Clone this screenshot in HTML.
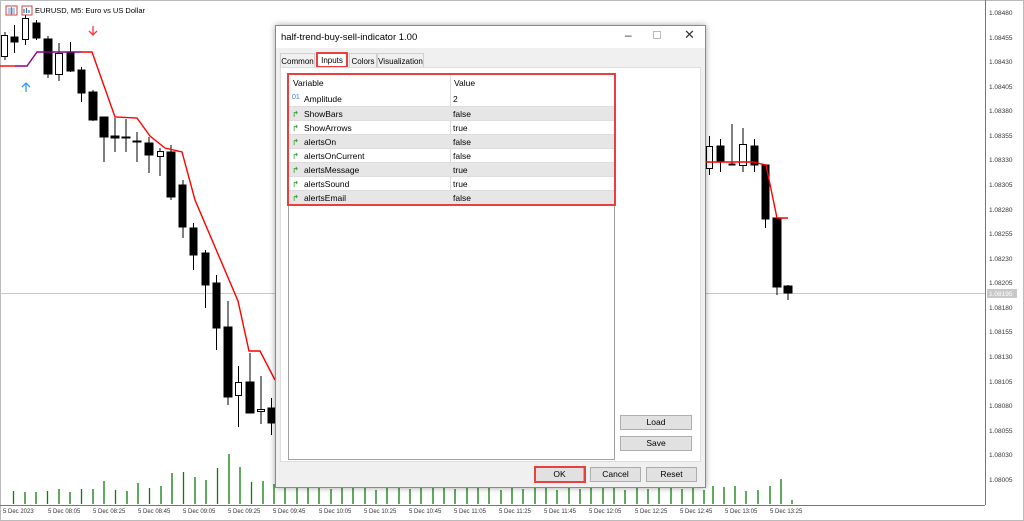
<!DOCTYPE html>
<html><head><meta charset="utf-8"><style>
*{margin:0;padding:0;box-sizing:border-box}
body{width:1024px;height:521px;background:#fff;position:relative;overflow:hidden;font-family:"Liberation Sans",sans-serif}
svg{position:absolute;left:0;top:0}
.dlg{position:absolute;left:275px;top:25px;width:431px;height:463px;background:#f0f0f0;border:1px solid #8a8a8a;box-shadow:0 0 6px rgba(0,0,0,.35);font-size:8.5px;color:#000}
.title{height:22px;background:#fff;font-size:9.5px;padding:6px 0 0 5px}
.ctl{position:absolute;top:4px;font-size:12px;color:#333}
.tab{position:absolute;top:27px;height:14px;border:1px solid #d0d0d0;border-bottom:none;background:#f0f0f0;font-size:8px;padding:3px 0 0;text-align:center;white-space:nowrap}
.panel{position:absolute;left:4px;top:41px;width:421px;height:395px;background:#fff;border:1px solid #ddd}
.tbl{position:absolute;left:7px;top:6px;width:327px;height:386px;border:1px solid #a0a0a0;background:#fff}
.row{position:absolute;left:0;width:325px;height:14px;font-size:8.5px}
.row span{position:absolute;top:2px}
.g{background:#e6e6e6;border-top:1px solid #ddd}
.btn{position:absolute;height:15px;background:#e1e1e1;border:1px solid #adadad;text-align:center;font-size:8.5px;line-height:13px}
.red{position:absolute;border:2px solid #e8403f}
</style></head><body>
<svg width="1024" height="521" xmlns="http://www.w3.org/2000/svg" font-family="Liberation Sans, sans-serif">
<rect x="0.5" y="0.5" width="1023" height="520" fill="none" stroke="#bbb"/>
<line x1="985.5" y1="0" x2="985.5" y2="505" stroke="#777"/>
<line x1="0" y1="505.5" x2="985" y2="505.5" stroke="#777"/>
<line x1="0" y1="293.5" x2="985" y2="293.5" stroke="#c8c8c8"/>
<g font-size="6.5" fill="#333">
<text x="989" y="15">1.08480</text><text x="989" y="40">1.08455</text><text x="989" y="64">1.08430</text><text x="989" y="89">1.08405</text><text x="989" y="113">1.08380</text><text x="989" y="138">1.08355</text><text x="989" y="162">1.08330</text><text x="989" y="187">1.08305</text><text x="989" y="212">1.08280</text><text x="989" y="236">1.08255</text><text x="989" y="261">1.08230</text><text x="989" y="285">1.08205</text><text x="989" y="310">1.08180</text><text x="989" y="334">1.08155</text><text x="989" y="359">1.08130</text><text x="989" y="384">1.08105</text><text x="989" y="408">1.08080</text><text x="989" y="433">1.08055</text><text x="989" y="457">1.08030</text><text x="989" y="482">1.08005</text>
</g>
<rect x="987" y="289" width="30" height="9" fill="#c8c8c8"/><text x="989" y="296" font-size="6.5" fill="#fff">1.08195</text>
<g font-size="6" fill="#333">
<text x="3" y="513">5 Dec 2023</text><text x="48" y="513">5 Dec 08:05</text><text x="93" y="513">5 Dec 08:25</text><text x="138" y="513">5 Dec 08:45</text><text x="183" y="513">5 Dec 09:05</text><text x="228" y="513">5 Dec 09:25</text><text x="273" y="513">5 Dec 09:45</text><text x="319" y="513">5 Dec 10:05</text><text x="364" y="513">5 Dec 10:25</text><text x="409" y="513">5 Dec 10:45</text><text x="454" y="513">5 Dec 11:05</text><text x="499" y="513">5 Dec 11:25</text><text x="544" y="513">5 Dec 11:45</text><text x="589" y="513">5 Dec 12:05</text><text x="635" y="513">5 Dec 12:25</text><text x="680" y="513">5 Dec 12:45</text><text x="725" y="513">5 Dec 13:05</text><text x="770" y="513">5 Dec 13:25</text>
</g>
<g stroke="#0a7d0a" stroke-width="1.3">
<path d="M13.5 504V491M25 504V492M36 504V492M47.5 504V491M59 504V489M70 504V492M81.5 504V489M93 504V489M104 504V481M115.5 504V490M127 504V491M138 504V483M149.5 504V488M161 504V486M172 504V473M183.5 504V472M195 504V477M206 504V480M217.5 504V468M229 504V454M240 504V467M251.5 504V482M263 504V481M274 504V484M285 504V486M297 504V488M308 504V487M319 504V485M331 504V489M342 504V487M353 504V486M365 504V488M376 504V490M387 504V487M399 504V486M410 504V489M421 504V488M433 504V486M444 504V487M455 504V489M467 504V488M478 504V486M489 504V488M501 504V490M512 504V487M523 504V489M535 504V486M546 504V488M557 504V490M569 504V487M580 504V489M591 504V488M603 504V486M614 504V488M625 504V490M637 504V487M648 504V489M659 504V488M671 504V487M682 504V489M693 504V488M704 504V490M713 504V486M724 504V487M735 504V486M746 504V491M758 504V490M770 504V486M781 504V479M792 504V500"/>
</g>
<g stroke="#000" stroke-width="1">
<path d="M5 32V60M14.5 25V53M25.5 15V45M36.5 20V40M48 36V78M59 43V81M70.5 42V72M81.5 67V102M93 90V121M104 117V162M115 118V152M126 119V152M137 132V162M149 137V173M160 148V176M171 145V200M183 180V238M193.5 223V270M205.5 250V308M216.5 275V350M228 301V405M238.5 366V427M250 353V413M261 376V424M271.5 398V435M709.5 136V175M720.5 139V172M732 124V165M743 128V172M754.5 139V172M765.5 165V228M777 218V295M788 285V300"/>
</g>
<g stroke="#000" stroke-width="1">
<rect x="1.5" y="35.5" width="6" height="21" fill="#fff"/>
<rect x="11" y="37" width="7" height="5" fill="#000"/>
<rect x="22.5" y="18.5" width="6" height="21" fill="#fff"/>
<rect x="33" y="23" width="7" height="15" fill="#000"/>
<rect x="44" y="39" width="8" height="35" fill="#000"/>
<rect x="55.5" y="53.5" width="7" height="21" fill="#fff"/>
<rect x="67" y="53" width="7" height="18" fill="#000"/>
<rect x="78" y="70" width="7" height="23" fill="#000"/>
<rect x="89" y="92" width="8" height="28" fill="#000"/>
<rect x="100" y="117" width="8" height="20" fill="#000"/>
<rect x="111" y="136" width="8" height="2" fill="#000"/>
<rect x="122" y="137" width="8" height="1" fill="#000"/>
<rect x="133" y="141" width="8" height="1" fill="#000"/>
<rect x="145" y="143" width="8" height="12" fill="#000"/>
<rect x="157.5" y="151.5" width="6" height="5" fill="#fff"/>
<rect x="167" y="152" width="8" height="45" fill="#000"/>
<rect x="179" y="185" width="7" height="42" fill="#000"/>
<rect x="190" y="228" width="7" height="27" fill="#000"/>
<rect x="202" y="253" width="7" height="32" fill="#000"/>
<rect x="213" y="283" width="7" height="45" fill="#000"/>
<rect x="224" y="327" width="8" height="70" fill="#000"/>
<rect x="235.5" y="382.5" width="6" height="13" fill="#fff"/>
<rect x="246" y="382" width="8" height="31" fill="#000"/>
<rect x="257.5" y="409.5" width="7" height="2" fill="#fff"/>
<rect x="268" y="408" width="7" height="15" fill="#000"/>
<rect x="706.5" y="146.5" width="6" height="22" fill="#fff"/>
<rect x="717" y="146" width="7" height="16" fill="#000"/>
<rect x="729" y="164" width="6" height="1" fill="#000"/>
<rect x="739.5" y="144.5" width="7" height="21" fill="#fff"/>
<rect x="751" y="146" width="7" height="19" fill="#000"/>
<rect x="762" y="165" width="7" height="54" fill="#000"/>
<rect x="773" y="218" width="8" height="69" fill="#000"/>
<rect x="784" y="286" width="8" height="7" fill="#000"/>
</g>
<polyline points="0,66 15,66" fill="none" stroke="#f00" stroke-width="1.4"/>
<polyline points="15,66 27,66 37,52 82,52" fill="none" stroke="#8b008b" stroke-width="1.4"/>
<polyline points="82,52 92,52 115,117 137,118 150,136 165,148 182,152 195,200 238,301 249,351 260,351 275,380" fill="none" stroke="#f00" stroke-width="1.4"/>
<polyline points="705,162 753,162 766,165 777,218 788,218" fill="none" stroke="#f00" stroke-width="1.4"/>
<path d="M93 26V35M89 31L93 35L97 31" fill="none" stroke="#f33" stroke-width="1.3"/>
<path d="M26 92V83M22 87L26 83L30 87" fill="none" stroke="#3399ff" stroke-width="1.3"/>
<rect x="6" y="6" width="11" height="9" fill="#fff" stroke="#d04040"/><path d="M8 9H15M8 11H15M8 13H15M11.5 7V15" stroke="#3a6fc0" stroke-width=".8"/>
<rect x="22" y="6" width="10" height="9" fill="#fff" stroke="#d04040"/><path d="M24 13V9M26.5 13V8M29 13V10" stroke="#3a6fc0" stroke-width="1.2"/>
<text x="35" y="13" font-size="7.5" fill="#000">EURUSD, M5:  Euro vs US Dollar</text>
</svg>

<div class="dlg">
 <div class="title">half-trend-buy-sell-indicator 1.00</div>
 <div class="ctl" style="left:349px;top:2px">&#8211;</div>
 <div class="ctl" style="left:377px;top:5px;width:8px;height:8px;border:1px solid #bbb"></div>
 <div class="ctl" style="left:408px;top:1px;font-size:13px">&#10005;</div>
 <div class="tab" style="left:4px;width:35px">Common</div>
 <div class="tab" style="left:40px;width:32px;background:#fff;top:26px;height:15px">Inputs</div>
 <div class="tab" style="left:73px;width:28px">Colors</div>
 <div class="tab" style="left:101px;width:47px">Visualization</div>
 <div class="red" style="left:40px;top:26px;width:32px;height:16px"></div>
 <div class="panel">
  <div class="tbl">
   <div class="row" style="top:1px"><span style="left:4px">Variable</span><span style="left:165px">Value</span></div>
   <div style="position:absolute;left:161px;top:0;width:1px;height:130px;background:#ddd"></div>
   <div class="row" style="top:17px"><span style="left:3px;color:#3a7bd5;font-size:7px">01</span><span style="left:15px">Amplitude</span><span style="left:164px">2</span></div>
   <div class="row g" style="top:31px"><span style="left:3px;color:#2a9a2a">&#8625;</span><span style="left:15px">ShowBars</span><span style="left:164px">false</span></div>
   <div class="row" style="top:45px;border-top:1px solid #ddd"><span style="left:3px;color:#2a9a2a">&#8625;</span><span style="left:15px">ShowArrows</span><span style="left:164px">true</span></div>
   <div class="row g" style="top:59px"><span style="left:3px;color:#2a9a2a">&#8625;</span><span style="left:15px">alertsOn</span><span style="left:164px">false</span></div>
   <div class="row" style="top:73px;border-top:1px solid #ddd"><span style="left:3px;color:#2a9a2a">&#8625;</span><span style="left:15px">alertsOnCurrent</span><span style="left:164px">false</span></div>
   <div class="row g" style="top:87px"><span style="left:3px;color:#2a9a2a">&#8625;</span><span style="left:15px">alertsMessage</span><span style="left:164px">true</span></div>
   <div class="row" style="top:101px;border-top:1px solid #ddd"><span style="left:3px;color:#2a9a2a">&#8625;</span><span style="left:15px">alertsSound</span><span style="left:164px">true</span></div>
   <div class="row g" style="top:115px"><span style="left:3px;color:#2a9a2a">&#8625;</span><span style="left:15px">alertsEmail</span><span style="left:164px">false</span></div>
  </div>
  <div class="red" style="left:6px;top:5px;width:329px;height:133px"></div>
  <div class="btn" style="left:339px;top:347px;width:72px">Load</div>
  <div class="btn" style="left:339px;top:368px;width:72px">Save</div>
 </div>
 <div class="btn" style="left:259px;top:441px;width:49px">OK</div>
 <div class="red" style="left:258px;top:440px;width:52px;height:17px"></div>
 <div class="btn" style="left:314px;top:441px;width:51px">Cancel</div>
 <div class="btn" style="left:370px;top:441px;width:51px">Reset</div>
</div>
</body></html>
